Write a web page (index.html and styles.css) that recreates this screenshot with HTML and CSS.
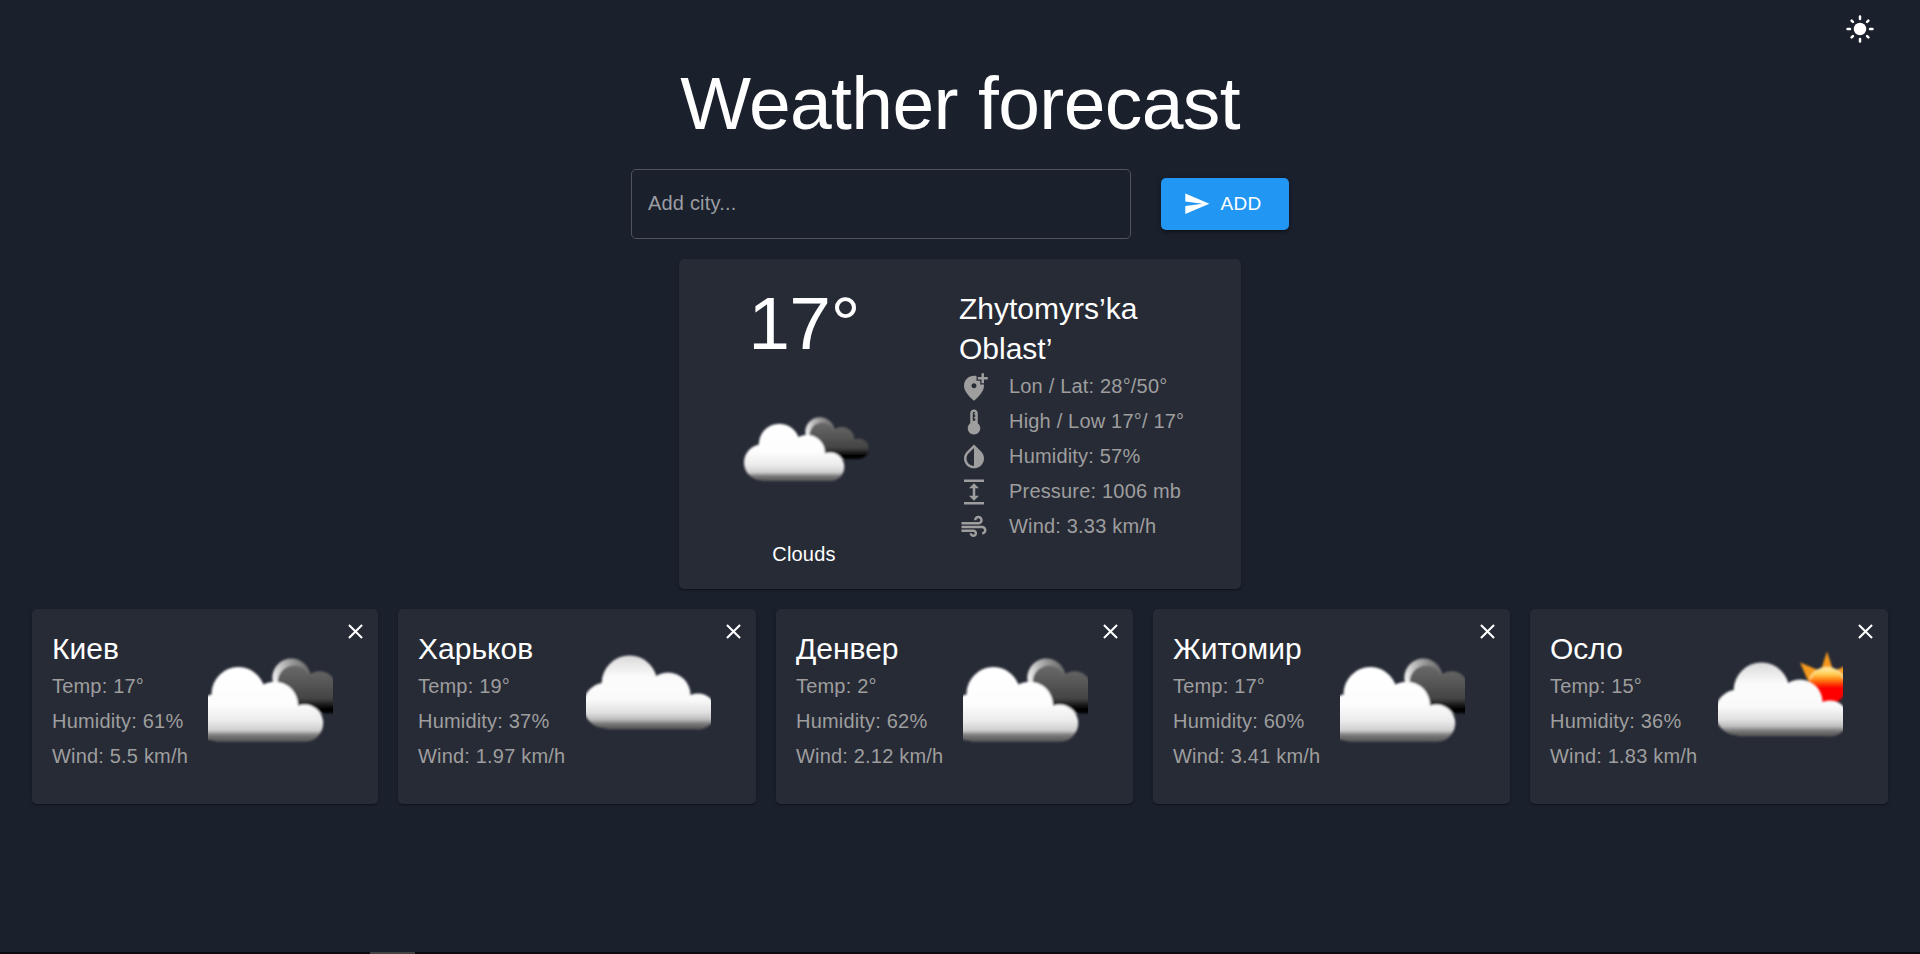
FILE: index.html
```html
<!DOCTYPE html>
<html lang="en">
<head>
<meta charset="utf-8">
<title>Weather forecast</title>
<link rel="stylesheet" href="styles.css">
</head>
<body>
<svg class="defs" width="0" height="0" aria-hidden="true">
  <defs>
    <filter id="soft" x="-10%" y="-10%" width="120%" height="120%"><feGaussianBlur stdDeviation="0.9"/></filter>
    <linearGradient id="white" gradientUnits="userSpaceOnUse" x1="0" y1="7" x2="0" y2="65">
      <stop offset="0" stop-color="#fff"/><stop offset=".5" stop-color="#fdfdfd"/><stop offset=".72" stop-color="#ececec"/><stop offset=".85" stop-color="#cfcfcf"/><stop offset=".91" stop-color="#7c7c7c"/><stop offset="1" stop-color="#565656"/>
    </linearGradient>
    <linearGradient id="dark" gradientUnits="userSpaceOnUse" x1="0" y1="6" x2="0" y2="43">
      <stop offset="0" stop-color="#6a6a6a"/><stop offset=".35" stop-color="#585858"/><stop offset=".7" stop-color="#444"/><stop offset=".9" stop-color="#050505"/><stop offset="1" stop-color="#000"/>
    </linearGradient>
    <linearGradient id="ring" gradientUnits="userSpaceOnUse" x1="64" y1="20" x2="90" y2="8">
      <stop offset="0" stop-color="#eee"/><stop offset=".5" stop-color="#aaa"/><stop offset="1" stop-color="#666"/>
    </linearGradient>
    <linearGradient id="grey" gradientUnits="userSpaceOnUse" x1="0" y1="5" x2="0" y2="79">
      <stop offset="0" stop-color="#d9d9d9"/><stop offset=".3" stop-color="#fbfbfb"/><stop offset=".6" stop-color="#fafafa"/><stop offset=".78" stop-color="#e0e0e0"/><stop offset=".87" stop-color="#bdbdbd"/><stop offset=".93" stop-color="#777"/><stop offset="1" stop-color="#555"/>
    </linearGradient>
    <linearGradient id="sun" gradientUnits="userSpaceOnUse" x1="0" y1="18" x2="0" y2="40">
      <stop offset="0" stop-color="#fff0b0"/><stop offset=".3" stop-color="#ffc94a"/><stop offset=".55" stop-color="#ff7a10"/><stop offset=".85" stop-color="#fb0d00"/><stop offset="1" stop-color="#f00"/>
    </linearGradient>
    <g id="broken-clouds" filter="url(#soft)">
      <circle cx="76" cy="16" r="14.7" fill="url(#ring)"/>
      <g fill="url(#dark)"><circle cx="78" cy="19" r="12.5"/><circle cx="97.5" cy="24" r="13"/><circle cx="114.500" cy="32.800" r="10.300"/><path d="M70 19H106L115 43.100H75Z"/></g>
      <g fill="url(#white)"><circle cx="18" cy="46.500" r="18"/><circle cx="35.300" cy="28.300" r="20.500"/><circle cx="63" cy="37" r="18"/><circle cx="86" cy="50.800" r="14.300"/><path d="M18 30H60L86 40V65.100H18Z"/></g>
    </g>
    <g id="cloud-shape" filter="url(#soft)">
      <g fill="url(#grey)"><circle cx="20" cy="55.500" r="23"/><circle cx="43.500" cy="33.300" r="27.800"/><circle cx="82" cy="45" r="22.500"/><circle cx="112" cy="61.500" r="18"/><path d="M20 34H80L112 52V79.300H20Z"/></g>
    </g>
    <symbol id="clouds-cover" viewBox="0 0 125 100"><use href="#broken-clouds" transform="translate(-15.700 6.900) scale(1.305)"/></symbol>
    <symbol id="cloud-cover" viewBox="0 0 125 100"><use href="#cloud-shape"/></symbol>
    <symbol id="sun-cover" viewBox="0 0 125 100">
      <g filter="url(#soft)">
        <path fill="#f69a1b" d="M109 1.500L103 20 115 20ZM82 12.500L91 33 100 20ZM136 12.500L118 20 127 33Z"/>
        <circle cx="109" cy="36" r="19" fill="url(#sun)"/>
        <path d="M92 29A18.500 18.500 0 0 1 126 29" fill="none" stroke="#ffdf8a" stroke-width="1.800"/>
      </g>
      <use href="#cloud-shape" transform="translate(0 7)"/>
    </symbol>
    <symbol id="close" viewBox="0 0 24 24"><path d="M19 6.410L17.590 5 12 10.590 6.410 5 5 6.410 10.590 12 5 17.590 6.410 19 12 13.410 17.590 19 19 17.590 13.410 12z"/></symbol>
  </defs>
</svg>

<header class="topbar">
  <button class="theme-toggle" aria-label="Toggle theme">
    <svg class="icon" viewBox="0 0 24 24"><circle cx="12" cy="12" r="5"/><path class="rays" d="M12 2v2M12 20v2M2 12h2M20 12h2M5.280 5.280l1.060 1.060M17.660 17.660l1.060 1.060M5.280 18.720l1.060-1.060M17.660 6.340l1.060-1.060"/></svg>
  </button>
</header>

<main class="page">
  <h1 class="title">Weather forecast</h1>
  <form class="search">
    <input class="search-input" type="text" placeholder="Add city...">
    <button class="add" type="button">
      <svg class="add-icon" viewBox="0 0 24 24"><path d="M2.010 21L23 12 2.010 3 2 10l15 2-15 2z"/></svg><span>ADD</span>
    </button>
  </form>

  <section class="card current">
    <div class="summary">
      <div class="degrees">17°</div>
      <div class="picture"><svg width="130" height="76" viewBox="-5 -5 130 76"><use href="#broken-clouds"/></svg></div>
      <div class="condition">Clouds</div>
    </div>
    <div class="details">
      <h2 class="place">Zhytomyrs’ka Oblast’</h2>
      <div class="row"><svg class="icon" viewBox="0 0 24 24"><path d="M20 1v3h3v2h-3v3h-2V6h-3V4h3V1h2zm-8 12c1.100 0 2-.9 2-2s-.9-2-2-2-2 .9-2 2 .9 2 2 2zm2-9.750V7h3v3h2.920c.05.39.08.79.08 1.200 0 3.320-2.670 7.250-8 11.800-5.330-4.550-8-8.480-8-11.800C4 6.220 7.800 3 12 3c.68 0 1.350.08 2 .25z"/></svg><span>Lon / Lat: 28°/50°</span></div>
      <div class="row"><svg class="icon" viewBox="0 0 24 24"><path d="M15 13V5c0-1.660-1.340-3-3-3S9 3.340 9 5v8c-1.210.91-2 2.370-2 4 0 2.760 2.240 5 5 5s5-2.240 5-5c0-1.630-.79-3.090-2-4zm-4-8c0-.55.45-1 1-1s1 .45 1 1h-1v1h1v2h-1v1h1v2h-2V5z"/></svg><span>High / Low 17°/ 17°</span></div>
      <div class="row"><svg class="icon" viewBox="0 0 24 24"><path d="M12 4.810V19c-3.310 0-6-2.630-6-5.870 0-1.560.62-3.030 1.750-4.140L12 4.810M6.350 7.560C4.900 8.990 4 10.960 4 13.130 4 17.480 7.580 21 12 21s8-3.520 8-7.870c0-2.170-.9-4.140-2.350-5.570L12 2 6.350 7.560z"/></svg><span>Humidity: 57%</span></div>
      <div class="row"><svg class="icon" viewBox="0 0 24 24"><path d="M4 20h16v2H4zM4 2h16v2H4zm9 7h3l-4-4-4 4h3v6H8l4 4 4-4h-3z"/></svg><span>Pressure: 1006 mb</span></div>
      <div class="row"><svg class="icon" viewBox="0 0 24 24"><path d="M14.500 17c0 1.650-1.350 3-3 3s-3-1.350-3-3h2c0 .55.45 1 1 1s1-.45 1-1-.45-1-1-1H2v-2h9.500c1.650 0 3 1.350 3 3zM19 6.500C19 4.570 17.430 3 15.500 3S12 4.570 12 6.500h2c0-.83.67-1.500 1.500-1.500s1.500.67 1.500 1.500S16.330 8 15.500 8H2v2h13.500c1.930 0 3.500-1.570 3.500-3.500zm-.5 4.500H2v2h16.500c.83 0 1.500.67 1.500 1.500s-.67 1.500-1.500 1.500v2c1.930 0 3.500-1.570 3.500-3.500S20.430 11 18.500 11z"/></svg><span>Wind: 3.33 km/h</span></div>
    </div>
  </section>

  <section class="cities">
    <article class="card city">
      <div><h2 class="place">Киев</h2><p class="line">Temp: 17°</p><p class="line">Humidity: 61%</p><p class="line">Wind: 5.5 km/h</p></div>
      <svg class="cover"><use href="#clouds-cover"/></svg>
      <button class="remove" aria-label="Remove"><svg><use href="#close"/></svg></button>
    </article>
    <article class="card city">
      <div><h2 class="place">Харьков</h2><p class="line">Temp: 19°</p><p class="line">Humidity: 37%</p><p class="line">Wind: 1.97 km/h</p></div>
      <svg class="cover"><use href="#cloud-cover"/></svg>
      <button class="remove" aria-label="Remove"><svg><use href="#close"/></svg></button>
    </article>
    <article class="card city">
      <div><h2 class="place">Денвер</h2><p class="line">Temp: 2°</p><p class="line">Humidity: 62%</p><p class="line">Wind: 2.12 km/h</p></div>
      <svg class="cover"><use href="#clouds-cover"/></svg>
      <button class="remove" aria-label="Remove"><svg><use href="#close"/></svg></button>
    </article>
    <article class="card city">
      <div><h2 class="place">Житомир</h2><p class="line">Temp: 17°</p><p class="line">Humidity: 60%</p><p class="line">Wind: 3.41 km/h</p></div>
      <svg class="cover"><use href="#clouds-cover"/></svg>
      <button class="remove" aria-label="Remove"><svg><use href="#close"/></svg></button>
    </article>
    <article class="card city">
      <div><h2 class="place">Осло</h2><p class="line">Temp: 15°</p><p class="line">Humidity: 36%</p><p class="line">Wind: 1.83 km/h</p></div>
      <svg class="cover"><use href="#sun-cover"/></svg>
      <button class="remove" aria-label="Remove"><svg><use href="#close"/></svg></button>
    </article>
  </section>
</main>
<footer class="edge"><span class="edge-mark"></span></footer>
</body>
</html>
```
FILE: styles.css
```css
* { box-sizing: border-box; }

body {
  margin: 0;
  height: 954px;
  overflow: hidden;
  display: flex;
  flex-direction: column;
  background: #1a202c;
  color: #fff;
  font: 20px/1.5 "Liberation Sans", Arial, sans-serif;
  letter-spacing: 0.00938em;
}

h1, h2, p { margin: 0; font-weight: 400; }
button { border: 0; padding: 0; background: none; color: inherit; font: inherit; }
svg { display: block; fill: currentColor; }
.defs { position: absolute; }

.topbar { display: flex; justify-content: flex-end; height: 58px; padding: 14px 45px 0 0; }
.theme-toggle { width: 30px; height: 30px; }
.icon { width: 30px; height: 30px; flex: none; }
.rays { stroke: currentColor; stroke-width: 2; stroke-linecap: round; }

.page { flex: 1; display: flex; flex-direction: column; align-items: center; }
.title { font-size: 75px; line-height: 90px; letter-spacing: -0.00833em; }

.search { display: flex; align-items: center; gap: 30px; margin: 21px 0 20px; }
.search-input {
  width: 500px;
  height: 70px;
  padding: 0 16px 2px;
  border: 1px solid #4f545d;
  border-radius: 5px;
  background: none;
  color: #fff;
  font: inherit;
  letter-spacing: inherit;
}
.search-input::placeholder { color: #9a9da2; opacity: 1; }
.add {
  display: flex;
  align-items: center;
  gap: 10px;
  width: 128px;
  height: 52px;
  padding-left: 22px;
  border-radius: 5px;
  background: #2196f3;
  box-shadow: 0 3px 2px -2px rgba(0, 0, 0, .25), 0 2px 3px rgba(0, 0, 0, .2), 0 1px 6px rgba(0, 0, 0, .15);
  font-size: 19px;
  letter-spacing: 0.015em;
}
.add-icon { width: 27.5px; height: 27.5px; }

.card {
  background: #272b36;
  border-radius: 5px;
  box-shadow: 0 2px 1px -1px rgba(0, 0, 0, .2), 0 1px 1px rgba(0, 0, 0, .14), 0 1px 4px rgba(0, 0, 0, .12);
}

.current { display: flex; gap: 50px; width: 562px; height: 330px; padding: 20px; }
.summary { width: 210px; text-align: center; }
.degrees { font-size: 75px; line-height: 88px; margin-bottom: 2px; letter-spacing: -0.00833em; }
.picture { display: flex; justify-content: center; height: 170px; padding-top: 42px; }
.details { width: 230px; padding-top: 10px; }
.place { font-size: 30px; line-height: 40px; letter-spacing: 0; }
.row { display: flex; align-items: center; gap: 20px; height: 35px; color: #9e9e9e; white-space: nowrap; }
.row span { padding-bottom: 2px; }

.cities {
  display: grid;
  grid-template-columns: 346px 358px 357px 357px 358px;
  gap: 20px;
  margin-top: 20px;
}
.city { position: relative; display: flex; justify-content: space-between; height: 195px; padding: 20px 45px 20px 20px; }
.line { line-height: 35px; color: #9e9e9e; }
.cover { width: 125px; height: 100px; margin-top: 21px; }
.remove { position: absolute; top: 10px; right: 10px; }
.remove svg { width: 25px; height: 25px; }

.edge { height: 2px; background: #0a0a0c; padding-left: 370px; }
.edge-mark { display: block; width: 45px; height: 2px; background: #444; }
```
